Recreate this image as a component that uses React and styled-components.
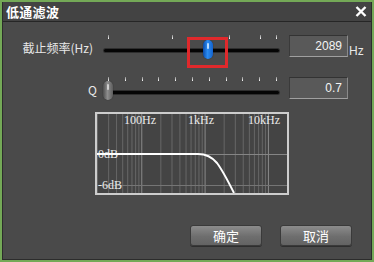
import React from 'react';
import styled, { createGlobalStyle } from 'styled-components';

const GlobalStyle = createGlobalStyle`
  html, body {
    margin: 0;
    padding: 0;
    background: #4a4a4a;
  }
  body {
    font-family: "Liberation Sans", "Noto Sans CJK SC", sans-serif;
  }
`;

const Window = styled.div`
  width: 374px;
  height: 262px;
  box-sizing: border-box;
  border: 2px solid #74a957;
  box-shadow: inset 0 0 0 1px #2c2c2c;
  background: #4a4a4a;
  display: flex;
  flex-direction: column;
  overflow: hidden;
`;

const TitleBar = styled.div`
  height: 19px;
  margin: 0 1px;
  padding: 0 4px 0 3px;
  background: #434343;
  border-bottom: 1px solid #262626;
  display: flex;
  align-items: center;
  justify-content: space-between;
`;

const Title = styled.span`
  color: #ffffff;
  font-family: "Noto Sans CJK SC", sans-serif;
  font-weight: 700;
  font-size: 13px;
  line-height: 19px;
  letter-spacing: 0.3px;
`;

const Body = styled.div`
  flex: 1;
  margin: 0 1px 1px;
  padding-top: 12px;
  display: flex;
  flex-direction: column;
`;

const Row = styled.div`
  display: flex;
  align-items: flex-start;
  height: 42px;
`;

const Label = styled.div`
  width: 100px;
  box-sizing: border-box;
  padding-right: ${p => p.$pad}px;
  margin-top: ${p => p.$top}px;
  text-align: right;
  color: #e8e8e8;
  font-size: 12px;
  line-height: 16px;
  font-family: "Noto Sans CJK SC", sans-serif;
  white-space: nowrap;
`;

const SliderBox = styled.div`
  position: relative;
  width: 180px;
  height: 30px;
`;

const Track = styled.div`
  margin: 15px 4px 0 1px;
  height: 3px;
  background: #050505;
  border-radius: 2px;
  box-shadow: 0 0 0 1px #2e2e2e;
`;

const Tick = styled.span`
  position: absolute;
  top: 1px;
  width: 1px;
  height: 4px;
  background: linear-gradient(#8a8a8a, #ffffff);
`;

const Thumb = styled.span`
  position: absolute;
  top: ${p => p.$top}px;
  width: 10px;
  height: 19px;
  border-radius: 5px;
  background: ${p => p.$blue
    ? 'linear-gradient(to right, #0a4aa8, #2b8cf2 45%, #1462cc)'
    : 'linear-gradient(to right, #4e4e4e, #8e8e8e 45%, #5c5c5c)'};
  box-shadow: 0 0 1px rgba(0,0,0,0.6);
  &::after {
    content: '';
    position: absolute;
    left: 4px;
    top: 3px;
    width: 2px;
    height: 6px;
    border-radius: 1px;
    background: ${p => p.$blue ? '#b8dcff' : '#d0d0d0'};
  }
`;

const Highlight = styled.span`
  position: absolute;
  left: 84px;
  top: 3px;
  width: 41px;
  height: 31px;
  box-sizing: border-box;
  border: 3px solid #e0292c;
`;

const ValueBox = styled.div`
  width: 59px;
  height: 22px;
  margin: 1px 0 0 6px;
  box-sizing: border-box;
  background: #595959;
  border-top: 1px solid #333;
  border-left: 1px solid #3a3a3a;
  border-bottom: 1px solid #a0a0a0;
  border-right: 1px solid #8a8a8a;
  color: #f4f4f4;
  font-size: 12px;
  line-height: 20px;
  text-align: right;
  padding-right: 5px;
`;

const Unit = styled.span`
  margin: 10px 0 0 1px;
  color: #e8e8e8;
  font-size: 12px;
  line-height: 14px;
`;

const Graph = styled.div`
  margin: -6px 0 0 92px;
  width: 194px;
  height: 83px;
  box-sizing: border-box;
  border: 2px solid #cdcdcd;
  background: #444444;
`;

const Footer = styled.div`
  margin-top: 30px;
  padding-right: 19px;
  display: flex;
  justify-content: flex-end;
  gap: 18px;
`;

const Button = styled.button`
  width: 72px;
  height: 21px;
  padding: 0;
  border: 1px solid #3a3a3a;
  border-radius: 3px;
  background: linear-gradient(#8c8c8c, #6e6e6e 55%, #636363);
  box-shadow: 0 1px 0 #2e2e2e;
  color: #ffffff;
  font-family: "Noto Sans CJK SC", sans-serif;
  font-size: 13px;
  line-height: 19px;
`;

const CloseIcon = () => (
  <svg width="12" height="11" viewBox="0 0 12 11">
    <path d="M1.5 1 L10.5 10 M10.5 1 L1.5 10" stroke="#fff" strokeWidth="2.4" />
  </svg>
);

const W = 190;
const H = 79;
const fx = f => (Math.log10(f / 20) / 3) * W;

const grid = [];
[10, 100, 1000, 10000].forEach(d => {
  for (let k = 1; k < 10; k++) {
    const f = d * k;
    if (f >= 20 && f <= 20000) grid.push(f);
  }
});

const Chart = () => (
  <svg width={W} height={H} viewBox={`0 0 ${W} ${H}`} style={{ display: 'block' }}>
    {grid.map(f => (
      <line key={f} x1={fx(f) + 0.5} x2={fx(f) + 0.5} y1="0" y2={H}
        stroke={[100, 1000, 10000].includes(f) ? '#8a8a8a' : '#676767'} strokeWidth="1" />
    ))}
    <line x1="0" x2={W} y1="40.5" y2="40.5" stroke="#858585" />
    <line x1="0" x2={W} y1="71.5" y2="71.5" stroke="#757575" />
    <g fontFamily='"Liberation Serif", serif' fontSize="12" fill="#ececec">
      <text x="27" y="10">100Hz</text>
      <text x="91" y="10">1kHz</text>
      <text x="151" y="10">10kHz</text>
      <text x="1" y="44">0dB</text>
      <text x="1" y="75">-6dB</text>
    </g>
    <path d="M0 40 L101 40 C110 40 115 43 120 49 C126 57 131 67 137 79"
      fill="none" stroke="#ffffff" strokeWidth="2" />
  </svg>
);

const freqTicks = [5, 69, 126, 157, 173];
const qTicks = Array.from({ length: 11 }, (_, i) => 5 + i * 16.8);

export default function App() {
  return (
    <>
      <GlobalStyle />
      <Window>
        <TitleBar>
          <Title>低通滤波</Title>
          <CloseIcon />
        </TitleBar>
        <Body>
          <Row>
            <Label $pad={10} $top={6}>截止频率(Hz)</Label>
            <SliderBox>
              {freqTicks.map(x => <Tick key={x} style={{ left: x }} />)}
              <Track />
              <Thumb $blue $top={6} style={{ left: 100 }} />
              <Highlight />
            </SliderBox>
            <ValueBox>2089</ValueBox>
            <Unit>Hz</Unit>
          </Row>
          <Row>
            <Label $pad={6} $top={6}>Q</Label>
            <SliderBox>
              {qTicks.map(x => <Tick key={x} style={{ left: Math.round(x) }} />)}
              <Track />
              <Thumb $top={5} style={{ left: 0 }} />
            </SliderBox>
            <ValueBox>0.7</ValueBox>
          </Row>
          <Graph>
            <Chart />
          </Graph>
          <Footer>
            <Button>确定</Button>
            <Button>取消</Button>
          </Footer>
        </Body>
      </Window>
    </>
  );
}
